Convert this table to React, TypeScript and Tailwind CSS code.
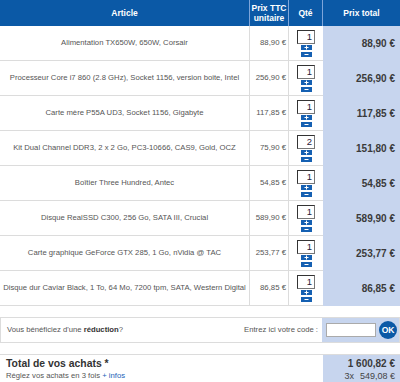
const items = [
  { name: 'Alimentation TX650W, 650W, Corsair', unit: '88,90 €', qty: 1, total: '88,90 €' },
  { name: 'Processeur Core i7 860 (2.8 GHz), Socket 1156, version boite, Intel', unit: '256,90 €', qty: 1, total: '256,90 €' },
  { name: 'Carte mère P55A UD3, Socket 1156, Gigabyte', unit: '117,85 €', qty: 1, total: '117,85 €' },
  { name: 'Kit Dual Channel DDR3, 2 x 2 Go, PC3-10666, CAS9, Gold, OCZ', unit: '75,90 €', qty: 2, total: '151,80 €' },
  { name: 'Boîtier Three Hundred, Antec', unit: '54,85 €', qty: 1, total: '54,85 €' },
  { name: 'Disque RealSSD C300, 256 Go, SATA III, Crucial', unit: '589,90 €', qty: 1, total: '589,90 €' },
  { name: 'Carte graphique GeForce GTX 285, 1 Go, nVidia @ TAC', unit: '253,77 €', qty: 1, total: '253,77 €' },
  { name: 'Disque dur Caviar Black, 1 To, 64 Mo, 7200 tpm, SATA, Western Digital', unit: '86,85 €', qty: 1, total: '86,85 €' },
];

function QtyButton({ minus }: { minus?: boolean }) {
  return (
    <svg width="11" height="5" viewBox="0 0 11 5" className="block">
      <rect width="11" height="5" fill="#1560b2" />
      <line x1="3.5" y1="2.5" x2="7.5" y2="2.5" stroke="#fff" strokeWidth="1" />
      {!minus && <line x1="5.5" y1="0.5" x2="5.5" y2="4.5" stroke="#fff" strokeWidth="1" />}
    </svg>
  );
}

function CartRow({ name, unit, qty, total }: (typeof items)[number]) {
  return (
    <div className="grid h-[35px] grid-cols-[250px_39px_34px_77px]">
      <div className="flex items-center justify-center whitespace-nowrap border-b border-r border-[#dcdcdc] text-center text-[7.7px] text-[#555]">
        {name}
      </div>
      <div className="flex items-center justify-end whitespace-nowrap border-b border-r border-[#dcdcdc] pr-[2px] text-[7.8px] text-[#555]">
        {unit}
      </div>
      <div className="flex flex-col items-center justify-center border-b border-[#dcdcdc]">
        <div className="flex h-[14px] w-[18px] items-center justify-end border border-[#777] border-l-[#333] border-t-[#333] bg-white pr-[2px] text-[9.5px] leading-none text-[#2a1838]">
          {qty}
        </div>
        <div className="mt-[1px] flex flex-col gap-[2px]">
          <QtyButton />
          <QtyButton minus />
        </div>
      </div>
      <div className="flex items-center justify-end bg-[#c7d5ee] pr-[5px] text-[10px] font-bold text-[#3a3a3a]">
        {total}
      </div>
    </div>
  );
}

export default function App() {
  return (
    <div className="h-[382px] w-[400px] overflow-hidden bg-white font-['Liberation_Sans',Arial,sans-serif]">
      <div className="grid h-[26px] grid-cols-[250px_39px_34px_77px] bg-[#0b59a6] text-[8.5px] font-bold leading-[10px] text-white">
        <div className="flex items-center justify-center border-r border-[#7ea5da]">Article</div>
        <div className="flex items-center justify-center border-r border-[#7ea5da] text-center">
          Prix TTC
          <br />
          unitaire
        </div>
        <div className="flex items-center justify-center border-r border-[#7ea5da]">Qté</div>
        <div className="flex items-center justify-center">Prix total</div>
      </div>

      {items.map((item) => (
        <CartRow key={item.name} {...item} />
      ))}

      <div className="mt-[11px] flex h-[26px] border border-[#dcdcdc]">
        <div className="flex flex-1 items-center justify-between pl-[6px] pr-[4px] text-[7.7px] text-[#555]">
          <span>
            Vous bénéficiez d'une <b className="text-[#333]">réduction</b>?
          </span>
          <span>Entrez ici votre code :</span>
        </div>
        <div className="flex w-[77px] items-center gap-[3px] bg-[#c7d5ee] pl-[4px]">
          <div className="h-[14px] w-[50px] border border-[#aaa] bg-white" />
          <div className="flex h-[18px] w-[18px] items-center justify-center rounded-full bg-[#0b59a6] text-[8.5px] font-bold text-white">
            OK
          </div>
        </div>
      </div>

      <div className="mt-[11px] flex h-[30px] border-t border-[#dcdcdc]">
        <div className="flex flex-1 flex-col justify-center pl-[6px]">
          <div className="text-[10.4px] font-bold leading-[13px] text-[#333]">Total de vos achats *</div>
          <div className="text-[7.7px] leading-[12px] text-[#555]">
            Réglez vos achats en 3 fois <span className="text-[#1a62b8]">+ infos</span>
          </div>
        </div>
        <div className="flex w-[77px] flex-col items-end justify-center bg-[#c7d5ee] pr-[5px]">
          <div className="text-[10px] font-bold leading-[13px] text-[#3a3a3a]">1 600,82 €</div>
          <div className="text-[9px] leading-[12px] text-[#444]">
            3x<span className="ml-[6px]">549,08 €</span>
          </div>
        </div>
      </div>
    </div>
  );
}
